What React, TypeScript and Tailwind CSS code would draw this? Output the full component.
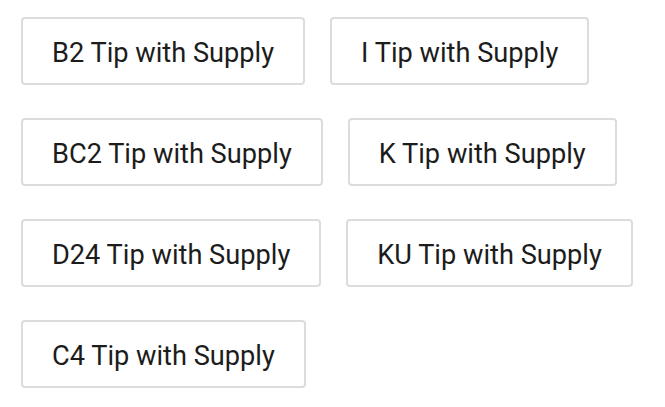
const rows: string[][] = [
  ["B2 Tip with Supply", "I Tip with Supply"],
  ["BC2 Tip with Supply", "K Tip with Supply"],
  ["D24 Tip with Supply", "KU Tip with Supply"],
  ["C4 Tip with Supply"],
];

export default function App() {
  return (
    <div
      className="w-[665px] h-[407px] bg-white pt-[17px] pl-[21px] flex flex-col gap-[33px]"
      style={{ fontFamily: "Roboto, 'Liberation Sans', sans-serif" }}
    >
      {rows.map((row, i) => (
        <div key={i} className="flex gap-[25px]">
          {row.map((label) => (
            <div
              key={label}
              className="h-[68px] px-[29px] pt-[4px] flex items-center border-2 border-[#dcdcdc] rounded-[4px] text-[27.2px] text-[#1c1c1c] whitespace-nowrap"
            >
              {label}
            </div>
          ))}
        </div>
      ))}
    </div>
  );
}
